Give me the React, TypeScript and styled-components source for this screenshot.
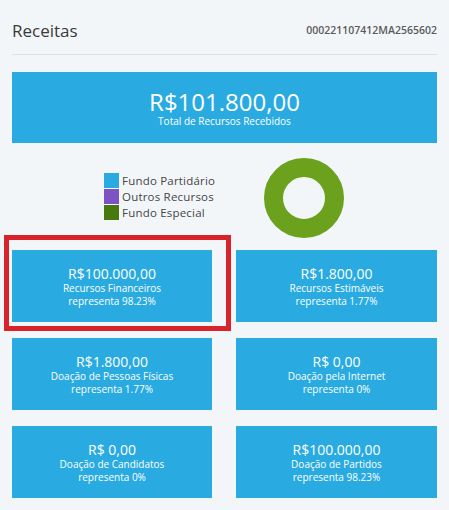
import styled, { createGlobalStyle } from "styled-components";

const GlobalStyle = createGlobalStyle`
  body {
    margin: 0;
    background: #f3f6f9;
    font-family: "Open Sans", "Liberation Sans", sans-serif;
  }
`;

const Page = styled.div`
  padding: 0 12px 10px;
  width: 425px;
`;

const Header = styled.header`
  display: flex;
  justify-content: space-between;
  align-items: center;
  height: 55px;
  padding-top: 6px;
  box-sizing: border-box;
  border-bottom: 1px solid #dde2e7;
`;

const Title = styled.h2`
  margin: 0;
  font-size: 17px;
  font-weight: 400;
  color: #3a3a3a;
`;

const Code = styled.span`
  font-size: 10.5px;
  font-weight: 600;
  color: #5b5b5b;
`;

const Box = styled.div<{ $big?: boolean }>`
  position: relative;
  background: #29abe2;
  color: #fff;
  height: ${(p) => (p.$big ? "71px" : "72px")};
  display: flex;
  flex-direction: column;
  align-items: center;
  justify-content: center;
  text-align: center;
`;

const Amount = styled.div<{ $big?: boolean }>`
  font-size: ${(p) => (p.$big ? "24px" : "14px")};
  line-height: ${(p) => (p.$big ? "27px" : "17px")};
`;

const Label = styled.div`
  font-size: 10px;
  line-height: 13px;
`;

const Highlight = styled.div`
  position: absolute;
  left: -8px;
  top: -15px;
  right: -19px;
  bottom: -9px;
  border: 5px solid #d9232b;
  pointer-events: none;
`;

const ChartRow = styled.div`
  display: flex;
  align-items: center;
  height: 107px;
  padding-left: 92px;
  gap: 55px;
`;

const Legend = styled.ul`
  list-style: none;
  margin: 0;
  padding: 0;
  width: 105px;
  display: flex;
  flex-direction: column;
  gap: 1px;
`;

const LegendItem = styled.li`
  display: flex;
  align-items: center;
  gap: 3px;
  font-size: 11.5px;
  line-height: 15px;
  letter-spacing: 0.2px;
  color: #454545;
  white-space: nowrap;
`;

const Swatch = styled.span<{ $color: string }>`
  flex: none;
  width: 15px;
  height: 15px;
  background: ${(p) => p.$color};
`;

const Donut = styled.div`
  flex: none;
  width: 80px;
  height: 80px;
  border-radius: 50%;
  box-sizing: border-box;
  border: 19px solid #6ca11e;
  margin-top: 2px;
`;

const Grid = styled.div`
  display: grid;
  grid-template-columns: 200px 201px;
  column-gap: 24px;
  row-gap: 16px;
`;

const legend = [
  { label: "Fundo Partidário", color: "#29abe2" },
  { label: "Outros Recursos", color: "#7d52c4" },
  { label: "Fundo Especial", color: "#467a0e" },
];

const cards = [
  { amount: "R$100.000,00", label: "Recursos Financeiros", pct: "98.23%", marked: true },
  { amount: "R$1.800,00", label: "Recursos Estimáveis", pct: "1.77%" },
  { amount: "R$1.800,00", label: "Doação de Pessoas Físicas", pct: "1.77%" },
  { amount: "R$ 0,00", label: "Doação pela Internet", pct: "0%" },
  { amount: "R$ 0,00", label: "Doação de Candidatos", pct: "0%" },
  { amount: "R$100.000,00", label: "Doação de Partidos", pct: "98.23%" },
];

const App = () => {
  return (
    <Page>
      <GlobalStyle />
      <Header>
        <Title>Receitas</Title>
        <Code>000221107412MA2565602</Code>
      </Header>
      <Box $big style={{ marginTop: 17 }}>
        <Amount $big>R$101.800,00</Amount>
        <Label>Total de Recursos Recebidos</Label>
      </Box>
      <ChartRow>
        <Legend>
          {legend.map((item) => (
            <LegendItem key={item.label}>
              <Swatch $color={item.color} />
              {item.label}
            </LegendItem>
          ))}
        </Legend>
        <Donut />
      </ChartRow>
      <Grid>
        {cards.map((card, i) => (
          <Box key={i}>
            <Amount>{card.amount}</Amount>
            <Label>{card.label}</Label>
            <Label>representa {card.pct}</Label>
            {card.marked && <Highlight />}
          </Box>
        ))}
      </Grid>
    </Page>
  );
};

export default App;
